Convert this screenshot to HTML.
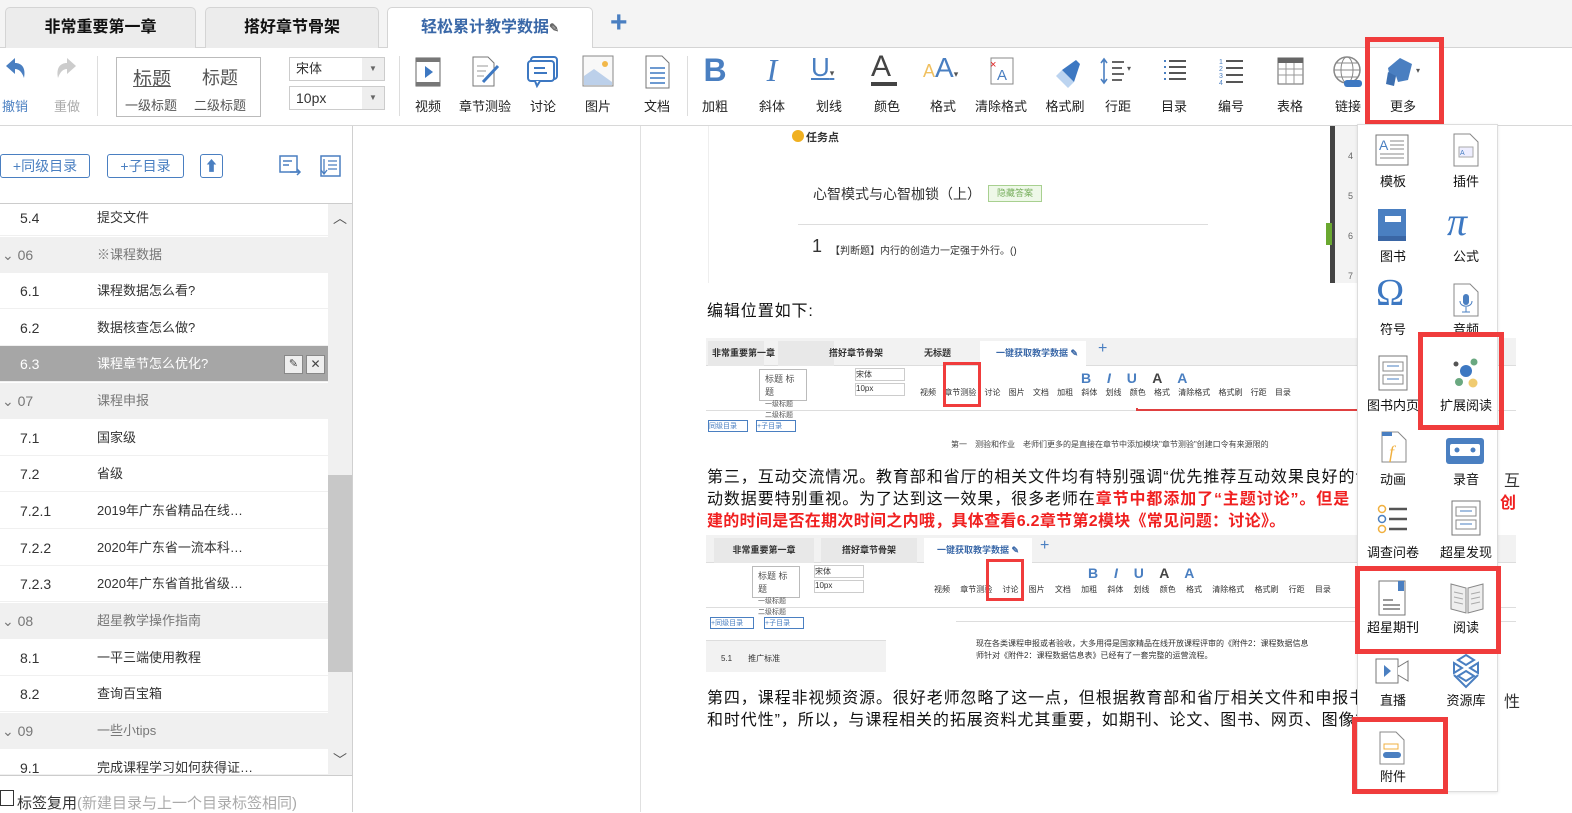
<!DOCTYPE html>
<html><head><meta charset="utf-8"><style>
*{margin:0;padding:0;box-sizing:border-box}
body{width:1572px;height:812px;overflow:hidden;background:#fff;font-family:"Liberation Sans","Noto Sans CJK SC",sans-serif;position:relative;color:#333}
.a{position:absolute}
.tab{position:absolute;top:7px;height:41px;border:1px solid #d4d4d4;border-bottom:none;border-radius:5px 5px 0 0;background:#ececec;font-weight:bold;font-size:16px;color:#111;text-align:center;line-height:40px}
.tb{position:absolute;top:54px;text-align:center;font-size:13px;color:#222}
.tb .l{position:absolute;top:42px;left:0;width:100%;white-space:nowrap}
.row{position:absolute;left:0;width:328px;height:36px;font-size:13px;line-height:36px;border-bottom:1px solid #f0f0f0}
.row .n{position:absolute;left:20px;font-size:14px}
.row .t{position:absolute;left:97px}
.g{background:#f0f0f0;color:#777}
.red{position:absolute;border:5px solid #f03c3c}
.dd{font-size:13px;color:#111;text-align:center;position:absolute;width:60px}
.p{position:absolute;left:707px;width:790px;overflow:hidden;font-size:16px;line-height:22px;color:#111;white-space:nowrap;letter-spacing:0.9px}
.shot{position:absolute;background:#fff;overflow:hidden}
</style></head><body>
<!-- tab bar -->
<div class="a" style="left:0;top:0;width:1572px;height:48px;background:#f4f4f4;border-bottom:1px solid #d4d4d4"></div>
<div class="tab" style="left:5px;width:191px">非常重要第一章</div>
<div class="tab" style="left:205px;width:174px">搭好章节骨架</div>
<div class="tab" style="left:387px;width:206px;background:#fff;color:#3a68a8;height:42px">轻松累计教学数据<span style="font-size:12px;color:#666">✎</span></div>
<div class="a" style="left:610px;top:6px;font-size:30px;color:#4a7fc1;font-weight:bold">+</div>
<!-- toolbar -->
<div class="a" style="left:0;top:48px;width:1572px;height:78px;background:#fff;border-bottom:1px solid #d8d8d8"></div>
<div class="tb" style="left:0;width:30px;color:#4a7fc1"><svg width="26" height="30" viewBox="0 0 26 30"><path d="M4 12 L13 4 L13 9 C20 9 24 14 22 24 C20 18 17 15 13 15 L13 20 Z" fill="#4a7fc1"/></svg><div class="l" style="color:#4a7fc1">撤销</div></div>
<div class="tb" style="left:52px;width:30px"><svg width="26" height="30" viewBox="0 0 26 30"><path d="M22 12 L13 4 L13 9 C6 9 2 14 4 24 C6 18 9 15 13 15 L13 20 Z" fill="#ccc"/></svg><div class="l" style="color:#aaa">重做</div></div>
<div class="a" style="left:97px;top:56px;width:1px;height:60px;background:#ddd"></div>
<div class="a" style="left:116px;top:57px;width:145px;height:60px;border:1px solid #bbb;color:#555">
<div class="a" style="left:16px;top:6px;font-size:19px;text-decoration:underline">标题</div><div class="a" style="left:85px;top:6px;font-size:18px">标题</div>
<div class="a" style="left:8px;top:37px;font-size:13px">一级标题</div><div class="a" style="left:77px;top:37px;font-size:13px">二级标题</div></div>
<div class="a" style="left:289px;top:57px;width:96px;height:24px;border:1px solid #ccc;font-size:13px;line-height:22px;padding-left:6px">宋体<div class="a" style="right:0;top:0;width:22px;height:22px;background:#eee;font-size:8px;text-align:center;color:#666">▼</div></div>
<div class="a" style="left:289px;top:86px;width:96px;height:24px;border:1px solid #ccc;font-size:14px;line-height:22px;padding-left:6px">10px<div class="a" style="right:0;top:0;width:22px;height:22px;background:#eee;font-size:8px;text-align:center;color:#666">▼</div></div>
<div class="a" style="left:399px;top:56px;width:1px;height:60px;background:#ddd"></div>
<div class="tb" style="left:410px;width:36px"><svg width="30" height="34"><rect x="3" y="4" width="24" height="28" fill="#fff" stroke="#666"/><rect x="3" y="4" width="24" height="4" fill="#777"/><rect x="3" y="28" width="24" height="4" fill="#777"/><path d="M12 12 L20 18 L12 24Z" fill="#3d78c2"/></svg><div class="l">视频</div></div>
<div class="tb" style="left:455px;width:60px"><svg width="34" height="34"><path d="M5 3 H20 L26 9 V32 H5Z" fill="#fff" stroke="#777"/><path d="M9 12H20M9 17H18M9 22H16" stroke="#999"/><path d="M15 28 L30 12" stroke="#3d78c2" stroke-width="3"/></svg><div class="l">章节测验</div></div>
<div class="tb" style="left:523px;width:40px"><svg width="36" height="34"><rect x="6" y="3" width="26" height="22" rx="3" fill="#fff" stroke="#3d78c2" stroke-width="2"/><rect x="3" y="7" width="26" height="20" rx="3" fill="#fff" stroke="#3d78c2" stroke-width="2"/><path d="M9 14H20M9 19H22" stroke="#3d78c2" stroke-width="2"/><path d="M10 27 L12 32 L15 27" fill="#fff" stroke="#3d78c2" stroke-width="2"/></svg><div class="l">讨论</div></div>
<div class="tb" style="left:580px;width:36px"><svg width="34" height="34"><rect x="2" y="2" width="30" height="30" fill="#f8f8f8" stroke="#888"/><path d="M3 31 L3 22 L13 15 L31 28 L31 31Z" fill="#bcd0ea"/><circle cx="24" cy="10" r="3" fill="#f2b84a"/></svg><div class="l">图片</div></div>
<div class="tb" style="left:640px;width:34px"><svg width="30" height="36"><path d="M4 2 H20 L27 9 V34 H4Z" fill="#fff" stroke="#777"/><path d="M8 14H23M8 19H23M8 24H23M8 29H23" stroke="#3d78c2" stroke-width="1.5"/></svg><div class="l">文档</div></div>
<div class="a" style="left:687px;top:56px;width:1px;height:60px;background:#ddd"></div>
<div class="tb" style="left:698px;width:34px;top:52px"><div style="font-size:32px;font-weight:bold;color:#4a7fc1;font-family:'Liberation Sans'">B</div><div class="l" style="top:44px">加粗</div></div>
<div class="tb" style="left:755px;width:34px;top:52px"><div style="font-size:32px;font-style:italic;color:#4a7fc1;font-family:'Liberation Serif'">I</div><div class="l" style="top:44px">斜体</div></div>
<div class="tb" style="left:811px;width:36px;top:52px"><div style="font-size:26px;color:#4a7fc1;text-decoration:underline;text-align:left">U<span style="font-size:9px;color:#555;text-decoration:none">▾</span></div><div class="l" style="top:44px">划线</div></div>
<div class="tb" style="left:868px;width:38px;top:52px"><div style="font-size:30px;color:#444;text-align:left;border-bottom:4px solid #444;width:26px;line-height:30px;margin-left:3px">A</div><div class="l" style="top:44px">颜色</div></div>
<div class="tb" style="left:923px;width:40px;top:52px"><div style="font-size:28px;color:#4a7fc1;text-align:left"><span style="color:#f0c060;font-size:18px">A</span>A<span style="font-size:9px;color:#555">▾</span></div><div class="l" style="top:44px">格式</div></div>
<div class="tb" style="left:970px;width:62px"><svg width="30" height="34"><rect x="5" y="4" width="22" height="26" fill="#fff" stroke="#888"/><text x="4" y="14" fill="#e02020" font-size="11" font-family="Liberation Sans">×</text><text x="11" y="26" fill="#4a7fc1" font-size="15" font-family="Liberation Sans">A</text></svg><div class="l">清除格式</div></div>
<div class="tb" style="left:1035px;width:60px"><svg width="34" height="36"><path d="M8 22 L20 34 L26 28 L14 16Z" fill="#bcd4f0"/><path d="M14 16 L26 28 L32 10 L28 6Z" fill="#3d78c2"/></svg><div class="l">格式刷</div></div>
<div class="tb" style="left:1098px;width:40px"><svg width="40" height="34"><path d="M6 6V28M3 9L6 5L9 9M3 25L6 29L9 25" stroke="#4a7fc1" stroke-width="1.6" fill="none"/><path d="M14 8H26M14 14H24M14 20H26M14 26H24" stroke="#666" stroke-width="2"/><text x="29" y="17" font-size="8" fill="#555">▾</text></svg><div class="l">行距</div></div>
<div class="tb" style="left:1156px;width:36px"><svg width="30" height="34"><path d="M5 7H7M5 13H7M5 19H7M5 25H7" stroke="#4a7fc1" stroke-width="2"/><path d="M10 7H27M10 13H27M10 19H27M10 25H27" stroke="#555" stroke-width="2"/></svg><div class="l">目录</div></div>
<div class="tb" style="left:1213px;width:36px"><svg width="30" height="34"><text x="3" y="10" font-size="7" fill="#4a7fc1">1</text><text x="3" y="17" font-size="7" fill="#4a7fc1">2</text><text x="3" y="24" font-size="7" fill="#4a7fc1">3</text><text x="3" y="31" font-size="7" fill="#4a7fc1">4</text><path d="M10 7H27M10 14H27M10 21H27M10 28H27" stroke="#555" stroke-width="2"/></svg><div class="l">编号</div></div>
<div class="tb" style="left:1272px;width:36px"><svg width="30" height="34"><rect x="3" y="4" width="25" height="26" fill="#fff" stroke="#666"/><rect x="3" y="4" width="25" height="5" fill="#666"/><path d="M3 15H28M3 21H28M11 9V30M19 9V30" stroke="#999"/></svg><div class="l">表格</div></div>
<div class="tb" style="left:1328px;width:40px"><svg width="36" height="36"><circle cx="17" cy="16" r="13" fill="none" stroke="#888" stroke-width="1.5"/><ellipse cx="17" cy="16" rx="6" ry="13" fill="none" stroke="#888"/><path d="M4 16H30M6 9H28M6 23H28" stroke="#888"/><rect x="14" y="26" width="18" height="7" rx="3" fill="#3d78c2"/></svg><div class="l">链接</div></div>
<div class="tb" style="left:1380px;width:46px"><svg width="46" height="36"><path d="M8 14 L20 4 L32 10 L28 26 L18 28 L16 22 L10 24Z" fill="#4a7fc1"/><path d="M8 18 L16 22 L14 32 L6 30Z" fill="#3d6fb0"/><text x="36" y="19" font-size="8" fill="#555">▾</text></svg><div class="l">更多</div></div>
<div class="red" style="left:1365px;top:37px;width:79px;height:88px"></div>

<!-- left panel -->
<div class="a" style="left:352px;top:126px;width:1px;height:686px;background:#d0d0d0"></div>
<div class="a" style="left:0;top:154px;width:90px;height:24px;border:1px solid #4a7fc1;border-radius:3px;color:#4a7fc1;font-size:14px;line-height:22px;text-align:center">+同级目录</div>
<div class="a" style="left:107px;top:154px;width:77px;height:24px;border:1px solid #4a7fc1;border-radius:3px;color:#4a7fc1;font-size:14px;line-height:22px;text-align:center">+子目录</div>
<div class="a" style="left:200px;top:154px;width:23px;height:24px;border:1px solid #4a7fc1;border-radius:3px;color:#4a7fc1;font-size:14px;line-height:22px;text-align:center">⬆</div>
<svg class="a" style="left:278px;top:154px" width="26" height="24"><rect x="2" y="2" width="17" height="16" fill="none" stroke="#4a7fc1" stroke-width="1.5"/><path d="M5 7H14M5 11H11M12 18H22M19 15L22 18L19 21" stroke="#4a7fc1" stroke-width="1.5" fill="none"/></svg>
<svg class="a" style="left:318px;top:154px" width="24" height="24"><rect x="3" y="2" width="19" height="20" fill="none" stroke="#4a7fc1" stroke-width="1.5"/><path d="M10 7H19M10 11H19M10 15H19M6 5V19M3 16L6 20L9 16" stroke="#4a7fc1" stroke-width="1.3" fill="none"/></svg>
<div class="a" style="left:0;top:203px;width:352px;height:1px;background:#ccc"></div>
<div class="row" style="top:200px"><span class="n">5.4</span><span class="t">提交文件</span></div>
<div class="row g" style="top:237px"><span class="n" style="left:2px">⌄ 06</span><span class="t">※课程数据</span></div>
<div class="row" style="top:273px"><span class="n">6.1</span><span class="t">课程数据怎么看?</span></div>
<div class="row" style="top:310px"><span class="n">6.2</span><span class="t">数据核查怎么做?</span></div>
<div class="row" style="top:346px;background:#a6a6a6;color:#fff"><span class="n">6.3</span><span class="t">课程章节怎么优化?</span><span class="a" style="left:284px;top:9px;width:19px;height:19px;background:#eee;border:1px solid #888;color:#444;font-size:11px;line-height:17px;text-align:center">✎</span><span class="a" style="left:306px;top:9px;width:19px;height:19px;background:#eee;border:1px solid #888;color:#444;font-size:12px;line-height:17px;text-align:center">✕</span></div>
<div class="row g" style="top:383px"><span class="n" style="left:2px">⌄ 07</span><span class="t">课程申报</span></div>
<div class="row" style="top:420px"><span class="n">7.1</span><span class="t">国家级</span></div>
<div class="row" style="top:456px"><span class="n">7.2</span><span class="t">省级</span></div>
<div class="row" style="top:493px"><span class="n">7.2.1</span><span class="t">2019年广东省精品在线…</span></div>
<div class="row" style="top:530px"><span class="n">7.2.2</span><span class="t">2020年广东省一流本科…</span></div>
<div class="row" style="top:566px"><span class="n">7.2.3</span><span class="t">2020年广东省首批省级…</span></div>
<div class="row g" style="top:603px"><span class="n" style="left:2px">⌄ 08</span><span class="t">超星教学操作指南</span></div>
<div class="row" style="top:640px"><span class="n">8.1</span><span class="t">一平三端使用教程</span></div>
<div class="row" style="top:676px"><span class="n">8.2</span><span class="t">查询百宝箱</span></div>
<div class="row g" style="top:713px"><span class="n" style="left:2px">⌄ 09</span><span class="t">一些小tips</span></div>
<div class="row" style="top:750px;height:25px;overflow:hidden"><span class="n">9.1</span><span class="t">完成课程学习如何获得证…</span></div>
<div class="a" style="left:328px;top:204px;width:24px;height:571px;background:#f0f0f0"></div>
<div class="a" style="left:328px;top:475px;width:24px;height:197px;background:#c8c8c8"></div>
<div class="a" style="left:333px;top:208px;font-size:14px;color:#555">︿</div>
<div class="a" style="left:333px;top:750px;font-size:14px;color:#555">﹀</div>
<div class="a" style="left:0;top:775px;width:352px;height:1px;background:#ccc"></div>
<div class="a" style="left:0;top:790px;width:14px;height:16px;border:1px solid #333"></div>
<div class="a" style="left:17px;top:792px;font-size:15px;color:#333">标签复用<span style="color:#aaa">(新建目录与上一个目录标签相同)</span></div>

<!-- editor area -->
<div class="a" style="left:640px;top:126px;width:1px;height:686px;background:#e0e0e0"></div>
<!-- shot 1 -->
<div class="shot" style="left:708px;top:126px;width:808px;height:157px">
<div class="a" style="left:0;top:0;width:1px;height:157px;background:#eee"></div>
<div class="a" style="left:84px;top:4px;width:12px;height:12px;border-radius:50%;background:#f0b020"></div>
<div class="a" style="left:98px;top:3px;font-size:11px;font-weight:bold">任务点</div>
<div class="a" style="left:105px;top:58px;font-size:14px;color:#333;white-space:nowrap">心智模式与心智枷锁（上）</div>
<div class="a" style="left:280px;top:59px;height:17px;border:1px solid #a8d090;background:#eef8e8;font-size:9px;color:#7ab060;text-align:center;line-height:15px;width:54px">隐藏答案</div>
<div class="a" style="left:90px;top:98px;width:410px;height:1px;background:#ddd"></div>
<div class="a" style="left:104px;top:110px;font-size:18px">1</div>
<div class="a" style="left:122px;top:116px;font-size:10px">【判断题】内行的创造力一定强于外行。()</div>
<div class="a" style="left:622px;top:0;width:5px;height:157px;background:#444"></div>
<div class="a" style="left:627px;top:0;width:120px;height:157px;background:#f3f3f3"></div>
<div class="a" style="left:618px;top:97px;width:6px;height:22px;background:#6aa830"></div>
<div class="a" style="left:640px;top:10px;font-size:9px;color:#666;line-height:40px">4<br>5<br>6<br>7</div>
</div>
<div class="p" style="top:301px">编辑位置如下:</div>
<!-- shot 2 -->
<div class="shot" style="left:706px;top:338px;width:810px;height:114px">
<div class="a" style="left:0;top:0;width:810px;height:28px;background:#f2f2f2;border-bottom:1px solid #ddd"></div>
<div class="a" style="left:2px;top:3px;width:56px;height:25px;background:#e8e8e8"></div>
<div class="a" style="left:6px;top:8px;font-size:9px;font-weight:bold">非常重要第一章</div>
<div class="a" style="left:72px;top:3px;width:56px;height:25px;background:#e8e8e8"></div>
<div class="a" style="left:123px;top:8px;font-size:9px;font-weight:bold">搭好章节骨架</div>
<div class="a" style="left:218px;top:8px;font-size:9px;font-weight:bold">无标题</div>
<div class="a" style="left:274px;top:3px;width:106px;height:26px;background:#fff"></div>
<div class="a" style="left:290px;top:8px;font-size:9px;font-weight:bold;color:#3a68a8">一键获取教学数据 ✎</div>
<div class="a" style="left:392px;top:2px;font-size:16px;color:#4a7fc1">+</div>
<div class="a" style="left:53px;top:31px;width:48px;height:32px;border:1px solid #bbb;font-size:9px;color:#555;padding:2px 5px">标题 标题<br><span style="font-size:7px">一级标题 二级标题</span></div>
<div class="a" style="left:149px;top:30px;width:50px;height:13px;border:1px solid #ccc;font-size:8px">宋体</div>
<div class="a" style="left:149px;top:45px;width:50px;height:13px;border:1px solid #ccc;font-size:8px">10px</div>
<div class="a" style="left:214px;top:30px;font-size:8px;color:#333;word-spacing:6px;white-space:nowrap;line-height:50px">视频 章节测验 讨论 图片 文档 加粗 斜体 划线 颜色 格式 清除格式 格式刷 行距 目录</div>
<div class="a" style="left:375px;top:32px;font-size:14px;color:#4a7fc1;word-spacing:12px;white-space:nowrap;font-weight:bold">B <i>I</i> U <span style="color:#444">A</span> A</div>
<div class="a" style="left:0;top:72px;width:810px;height:1px;background:#ddd"></div>
<div class="a" style="left:2px;top:82px;width:40px;height:12px;border:1px solid #4a7fc1;font-size:7px;color:#4a7fc1">同级目录</div>
<div class="a" style="left:50px;top:82px;width:40px;height:12px;border:1px solid #4a7fc1;font-size:7px;color:#4a7fc1">+子目录</div>
<div class="a" style="left:430px;top:70px;width:340px;height:3px;border:2px solid #e04040;border-top:none"></div>
<div class="a" style="left:245px;top:101px;font-size:8px;color:#444;white-space:nowrap">第一　测验和作业　老师们更多的是直接在章节中添加模块"章节测验"创建口令有来源限的</div>
<div class="red" style="left:237px;top:24px;width:38px;height:45px;border-width:3px"></div>
</div>
<div class="p" style="top:467px">第三，互动交流情况。教育部和省厅的相关文件均有特别强调“优先推荐互动效果良好的课程”，互</div>
<div class="a" style="left:1504px;top:467px;font-size:16px">互</div>
<div class="p" style="top:489px">动数据要特别重视。为了达到这一效果，很多老师在<b style="color:#f02020">章节中都添加了“主题讨论”。但是</b></div>
<div class="a" style="left:1500px;top:489px;font-size:16px;color:#f02020;font-weight:bold">创</div>
<div class="p" style="top:511px;color:#f02020;font-weight:bold;letter-spacing:0.3px">建的时间是否在期次时间之内哦，具体查看6.2章节第2模块《常见问题：讨论》。</div>
<!-- shot 3 -->
<div class="shot" style="left:706px;top:535px;width:810px;height:137px">
<div class="a" style="left:0;top:0;width:810px;height:28px;background:#f2f2f2;border-bottom:1px solid #ddd"></div>
<div class="a" style="left:8px;top:3px;width:100px;height:25px;background:#e8e8e8;font-size:9px;font-weight:bold;text-align:center;line-height:25px">非常重要第一章</div>
<div class="a" style="left:115px;top:3px;width:96px;height:25px;background:#e8e8e8;font-size:9px;font-weight:bold;text-align:center;line-height:25px">搭好章节骨架</div>
<div class="a" style="left:218px;top:3px;width:108px;height:26px;background:#fff;font-size:9px;font-weight:bold;color:#3a68a8;text-align:center;line-height:25px">一键获取教学数据 ✎</div>
<div class="a" style="left:334px;top:2px;font-size:16px;color:#4a7fc1">+</div>
<div class="a" style="left:46px;top:31px;width:48px;height:32px;border:1px solid #bbb;font-size:9px;color:#555;padding:2px 5px">标题 标题<br><span style="font-size:7px">一级标题 二级标题</span></div>
<div class="a" style="left:108px;top:30px;width:50px;height:13px;border:1px solid #ccc;font-size:8px">宋体</div>
<div class="a" style="left:108px;top:45px;width:50px;height:13px;border:1px solid #ccc;font-size:8px">10px</div>
<div class="a" style="left:228px;top:30px;font-size:8px;color:#333;word-spacing:8px;white-space:nowrap;line-height:50px">视频 章节测验 讨论 图片 文档 加粗 斜体 划线 颜色 格式 清除格式 格式刷 行距 目录</div>
<div class="a" style="left:382px;top:30px;font-size:14px;color:#4a7fc1;word-spacing:12px;white-space:nowrap;font-weight:bold">B <i>I</i> U <span style="color:#444">A</span> A</div>
<div class="a" style="left:0;top:72px;width:810px;height:1px;background:#ddd"></div>
<div class="a" style="left:4px;top:82px;width:44px;height:12px;border:1px solid #4a7fc1;font-size:7px;color:#4a7fc1">+同级目录</div>
<div class="a" style="left:58px;top:82px;width:40px;height:12px;border:1px solid #4a7fc1;font-size:7px;color:#4a7fc1">+子目录</div>
<div class="a" style="left:0;top:105px;width:180px;height:32px;background:#f2f2f2;border-top:1px solid #ddd"></div>
<div class="a" style="left:15px;top:118px;font-size:8px">5.1　　推广标准</div>
<div class="a" style="left:250px;top:86px;width:560px;height:1px;background:#ddd"></div>
<div class="a" style="left:270px;top:103px;font-size:8px;color:#333;line-height:12px;white-space:nowrap">现在各类课程申报或者验收，大多用得是国家精品在线开放课程评审的《附件2：课程数据信息<br>师针对《附件2：课程数据信息表》已经有了一套完整的运营流程。</div>
<div class="red" style="left:280px;top:24px;width:38px;height:42px;border-width:3px"></div>
</div>
<div class="p" style="top:688px">第四，课程非视频资源。很好老师忽略了这一点，但根据教育部和省厅相关文件和申报书中“先进性</div>
<div class="a" style="left:1504px;top:688px;font-size:16px">性</div>
<div class="p" style="top:710px">和时代性”，所以，与课程相关的拓展资料尤其重要，如期刊、论文、图书、网页、图像等。</div>

<!-- dropdown -->
<div class="a" style="left:1357px;top:124px;width:141px;height:668px;background:#fff;border:1px solid #ddd;box-shadow:0 1px 3px rgba(0,0,0,.1)"></div>
<svg class="a" style="left:1374px;top:133px" width="36" height="34"><rect x="2" y="2" width="32" height="30" fill="#fff" stroke="#777"/><text x="5" y="17" font-size="14" fill="#4a7fc1" font-family="Liberation Sans">A</text><path d="M16 8H30M16 12H30M16 16H30M6 21H30M6 25H30" stroke="#888"/></svg>
<div class="dd" style="left:1363px;top:171px">模板</div>
<svg class="a" style="left:1452px;top:132px" width="28" height="36"><path d="M2 2H18L26 10V34H2Z" fill="#fff" stroke="#888"/><rect x="7" y="15" width="14" height="10" fill="#eef" stroke="#aaa"/><text x="8" y="23" font-size="7" fill="#4a7fc1">A</text></svg>
<div class="dd" style="left:1436px;top:171px">插件</div>
<svg class="a" style="left:1377px;top:208px" width="30" height="34"><rect x="1" y="1" width="28" height="32" fill="#4a7fc1"/><rect x="1" y="28" width="28" height="5" fill="#3a66a5"/><rect x="8" y="8" width="16" height="6" fill="#fff"/></svg>
<div class="dd" style="left:1363px;top:246px">图书</div>
<div class="a" style="left:1447px;top:198px;font-size:40px;font-family:'Liberation Serif';font-style:italic;color:#3d78c2">π</div>
<div class="dd" style="left:1436px;top:246px">公式</div>
<div class="a" style="left:1376px;top:273px;font-size:38px;font-family:'Liberation Serif';color:#3d78c2;line-height:40px">Ω</div>
<div class="dd" style="left:1363px;top:319px">符号</div>
<svg class="a" style="left:1452px;top:282px" width="28" height="36"><path d="M2 2H18L26 10V34H2Z" fill="#fff" stroke="#888"/><rect x="11" y="12" width="6" height="11" rx="3" fill="#4a7fc1"/><path d="M8 19C8 26 20 26 20 19M14 25V30M10 30H18" stroke="#4a7fc1" fill="none"/></svg>
<div class="dd" style="left:1436px;top:319px">音频</div>
<svg class="a" style="left:1378px;top:355px" width="30" height="36"><rect x="1" y="1" width="28" height="34" fill="#fff" stroke="#777"/><rect x="5" y="7" width="20" height="9" fill="#fff" stroke="#888"/><rect x="5" y="20" width="20" height="9" fill="#fff" stroke="#888"/><path d="M9 11H21M9 24H21" stroke="#4a7fc1"/></svg>
<div class="dd" style="left:1363px;top:395px">图书内页</div>
<svg class="a" style="left:1452px;top:358px" width="28" height="32"><circle cx="4" cy="6" r="2.5" fill="#555"/><circle cx="22" cy="4" r="3.5" fill="#6aa880"/><circle cx="14" cy="13" r="6" fill="#3d78c2"/><circle cx="7" cy="24" r="4" fill="#6aa880"/><circle cx="21" cy="25" r="4.5" fill="#f0cb70"/></svg>
<div class="dd" style="left:1436px;top:395px">扩展阅读</div>
<div class="red" style="left:1418px;top:332px;width:86px;height:98px"></div>
<svg class="a" style="left:1380px;top:430px" width="28" height="34"><path d="M2 2H18L26 10V32H2Z" fill="#fff" stroke="#888"/><rect x="2" y="2" width="10" height="4" fill="#4a7fc1"/><text x="9" y="28" font-size="18" font-style="italic" fill="#f0b040" font-family="Liberation Serif">f</text></svg>
<div class="dd" style="left:1363px;top:469px">动画</div>
<svg class="a" style="left:1444px;top:432px" width="42" height="34"><rect x="2" y="6" width="38" height="26" rx="3" fill="#4a7fc1"/><rect x="6" y="12" width="30" height="12" rx="2" fill="#fff"/><circle cx="13" cy="18" r="2.5" fill="#4a7fc1"/><circle cx="29" cy="18" r="2.5" fill="#4a7fc1"/></svg>
<div class="dd" style="left:1436px;top:469px">录音</div>
<svg class="a" style="left:1377px;top:504px" width="32" height="32"><circle cx="5" cy="5" r="3.5" fill="none" stroke="#f0b040" stroke-width="1.5"/><circle cx="5" cy="15" r="3.5" fill="none" stroke="#4a7fc1" stroke-width="1.5"/><circle cx="5" cy="25" r="3.5" fill="none" stroke="#f0b040" stroke-width="1.5"/><path d="M12 5H30M12 15H30M12 25H30" stroke="#555" stroke-width="2.5"/></svg>
<div class="dd" style="left:1363px;top:542px">调查问卷</div>
<svg class="a" style="left:1451px;top:500px" width="30" height="36"><rect x="1" y="1" width="28" height="34" fill="#fff" stroke="#777"/><rect x="5" y="7" width="20" height="9" fill="#fff" stroke="#888"/><rect x="5" y="20" width="20" height="9" fill="#fff" stroke="#888"/><path d="M9 11H21M9 24H21" stroke="#4a7fc1"/></svg>
<div class="dd" style="left:1436px;top:542px">超星发现</div>
<svg class="a" style="left:1378px;top:580px" width="28" height="36"><rect x="1" y="1" width="26" height="34" fill="#fff" stroke="#777"/><rect x="20" y="1" width="6" height="10" fill="#4a7fc1"/><path d="M5 20H15M5 25H22M5 29H22" stroke="#777" stroke-width="1.5"/></svg>
<div class="dd" style="left:1363px;top:617px">超星期刊</div>
<svg class="a" style="left:1449px;top:580px" width="36" height="34"><path d="M2 4L17 8V33L2 29Z M34 4L19 8V33L34 29Z" fill="#eee" stroke="#888"/><path d="M5 12L14 14M5 17L14 19M5 22L14 24M22 14L31 12M22 19L31 17M22 24L31 22" stroke="#aaa"/></svg>
<div class="dd" style="left:1436px;top:617px">阅读</div>
<div class="red" style="left:1355px;top:566px;width:146px;height:88px"></div>
<svg class="a" style="left:1375px;top:658px" width="36" height="26"><rect x="1" y="1" width="22" height="24" fill="#fff" stroke="#777"/><path d="M23 9L33 3V23L23 17" fill="#fff" stroke="#777"/><path d="M9 7L16 13L9 19Z" fill="#4a7fc1"/></svg>
<div class="dd" style="left:1363px;top:690px">直播</div>
<svg class="a" style="left:1450px;top:653px" width="32" height="36"><path d="M16 2L24 7L16 12L8 7Z M4 10L12 15L4 20Z M28 10L20 15L28 20Z M16 18L24 23L16 28L8 23Z M4 22L16 34L28 22" fill="none" stroke="#4a7fc1" stroke-width="2"/></svg>
<div class="dd" style="left:1436px;top:690px">资源库</div>
<svg class="a" style="left:1378px;top:730px" width="28" height="36"><path d="M2 2H18L26 10V34H2Z" fill="#fff" stroke="#888"/><rect x="6" y="14" width="14" height="5" fill="#fff" stroke="#f0b040"/><rect x="5" y="22" width="18" height="6" rx="3" fill="#4a7fc1"/></svg>
<div class="dd" style="left:1363px;top:766px">附件</div>
<div class="red" style="left:1352px;top:717px;width:96px;height:77px"></div>
</body></html>
